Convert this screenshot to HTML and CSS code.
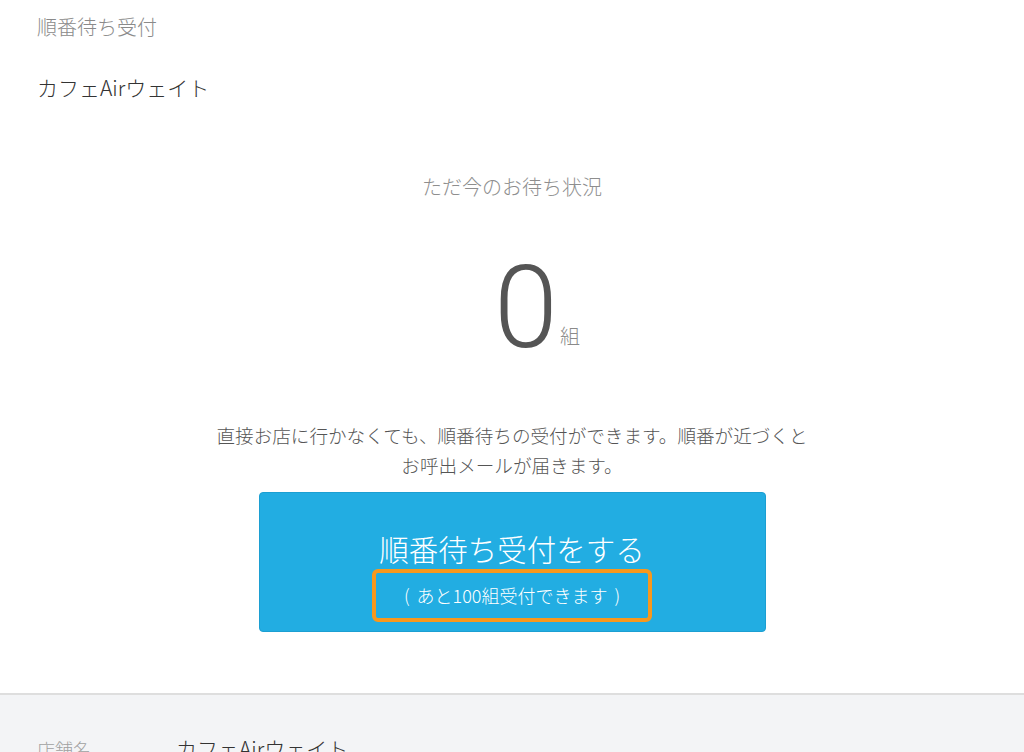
FILE: index.html
```html
<!DOCTYPE html>
<html lang="ja">
<head>
    <meta charset="UTF-8">
    <meta name="viewport" content="width=device-width, initial-scale=1.0">
    <title>順番待ち受付</title>
    <link rel="stylesheet" href="styles.css">
</head>
<body>
    <div class="page">
        <header class="header">
            <div class="page-title">順番待ち受付</div>
            <div class="shop-name">カフェAirウェイト</div>
        </header>

        <main class="status">
            <div class="status-label">ただ今のお待ち状況</div>
            <div class="count">
                <span class="count-num">0</span><span class="count-unit">組</span>
            </div>
            <p class="desc">直接お店に行かなくても、順番待ちの受付ができます。順番が近づくとお呼出メールが届きます。</p>
            <button class="entry-btn" type="button">
                <span class="entry-title">順番待ち受付をする</span>
                <span class="entry-note">(&nbsp;あと100組受付できます&nbsp;)</span>
            </button>
        </main>

        <section class="info">
            <div class="info-row">
                <div class="info-label">店舗名</div>
                <div class="info-value">カフェAirウェイト</div>
            </div>
        </section>
    </div>
</body>
</html>
```

FILE: styles.css
```css
* {
    margin: 0;
    padding: 0;
    box-sizing: border-box;
}

body {
    font-family: "Noto Sans CJK JP", "Noto Sans", sans-serif;
    font-weight: 300;
    color: #333;
    background: #fff;
}

.header {
    padding: 17px 37px 0;
}

.page-title {
    font-size: 20px;
    line-height: 20px;
    color: #8a8a8a;
}

.shop-name {
    margin-top: 40px;
    font-size: 21px;
    line-height: 20px;
    color: #333;
}

.status {
    display: flex;
    flex-direction: column;
    align-items: center;
    padding-bottom: 61px;
    border-bottom: 2px solid #dedede;
}

.status-label {
    margin-top: 80px;
    font-size: 20px;
    line-height: 20px;
    color: #8e8e8e;
}

.count {
    margin-top: 53px;
    padding-left: 50px;
    height: 115px;
    line-height: 115px;
    white-space: nowrap;
}

.count-num {
    font-family: Roboto, "Noto Sans", sans-serif;
    font-weight: 300;
    font-size: 115px;
    color: #555;
}

.count-unit {
    margin-left: 2px;
    font-size: 20px;
    color: #8a8a8a;
    vertical-align: 3px;
}

.desc {
    margin-top: 55px;
    max-width: 600px;
    font-size: 18.6px;
    line-height: 30px;
    color: #555;
    text-align: center;
}

.entry-btn {
    margin-top: 12px;
    width: 507px;
    height: 140px;
    padding-top: 40px;
    display: flex;
    flex-direction: column;
    align-items: center;
    background: #22ade2;
    border: 1px solid #1c9fd2;
    border-radius: 4px;
    color: #fff;
    font-family: inherit;
    font-weight: 300;
    cursor: pointer;
}

.entry-title {
    font-size: 29.5px;
    line-height: 30px;
}

.entry-note {
    margin-top: 6px;
    width: 280px;
    height: 53px;
    border: 4px solid #f8981d;
    border-radius: 6px;
    font-size: 18px;
    line-height: 45px;
    text-align: center;
    word-spacing: 3px;
}

.info {
    background: #f3f4f6;
    padding: 38px 37px 60px;
    min-height: 200px;
}

.info-row {
    display: flex;
    align-items: baseline;
}

.info-label {
    width: 139px;
    font-size: 18px;
    color: #a0a0a0;
}

.info-value {
    font-size: 21px;
    color: #333;
}
```
